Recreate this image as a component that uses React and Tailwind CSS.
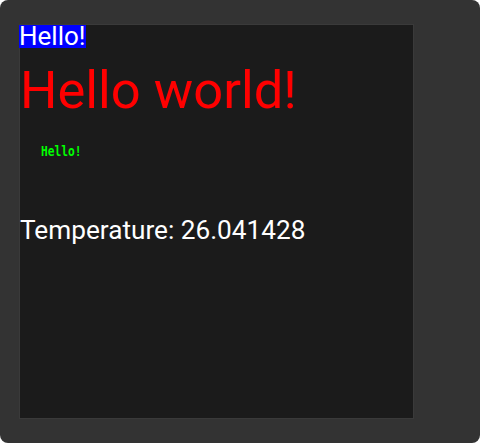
export default function App() {
  return (
    <div className="w-[481px] h-[444px] bg-white">
      <div className="w-[480px] h-[443px] rounded-[8px] bg-[#333333] pt-[24px] pl-[19px]">
        <div className="w-[395px] h-[395px] border border-[#3a3a3a] bg-[#1b1b1b] flex flex-col items-start" style={{ fontFamily: 'Roboto, sans-serif' }}>
          <div className="bg-[#0000ff] text-white text-[26px] leading-[23px] h-[23px] -ml-px">Hello!</div>
          <div className="text-[#ff0000] text-[52.5px] leading-[60px] mt-[12px]">Hello world!</div>
          <div className="text-[#00ff00] text-[14px] leading-[16px] mt-[23px] ml-[21px] origin-left scale-x-[0.8] font-bold" style={{ fontFamily: '"DejaVu Sans Mono", monospace' }}>Hello!</div>
          <div className="text-white text-[26.2px] leading-[30px] mt-[56px]">Temperature: 26.041428</div>
        </div>
      </div>
    </div>
  );
}
